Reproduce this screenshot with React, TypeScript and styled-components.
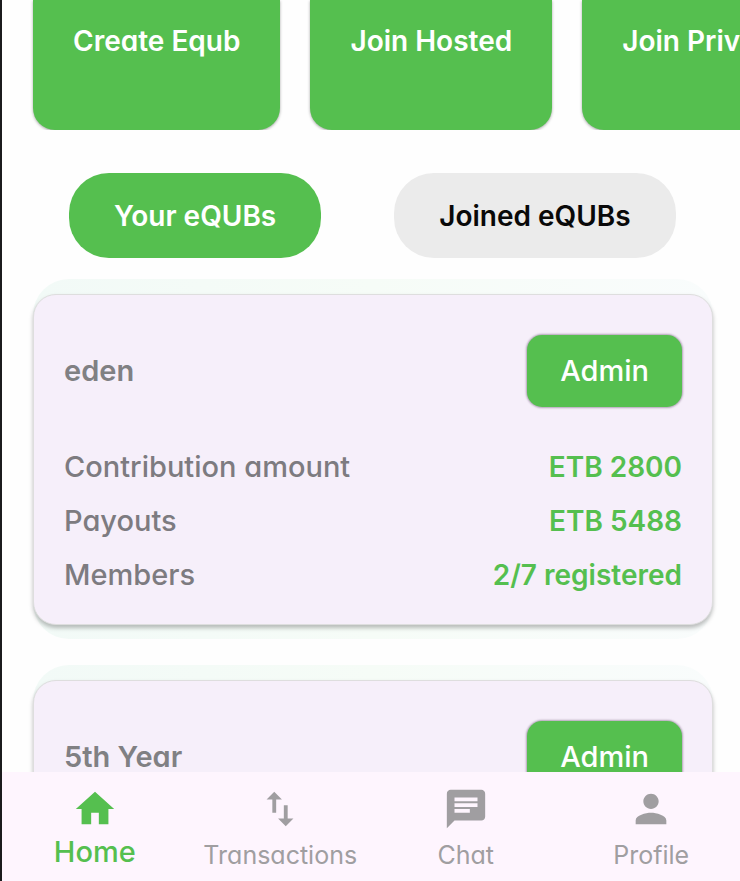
import React from "react";
import styled, { createGlobalStyle } from "styled-components";
import type { IconType } from "react-icons";
import { MdChat, MdHome, MdPerson, MdSwapVert } from "react-icons/md";

const green = "#55bf4f";

const GlobalStyle = createGlobalStyle`
  *, *::before, *::after { box-sizing: border-box; }
  body {
    margin: 0;
    background: #fefefe;
    font-family: Inter, "Open Sans", sans-serif;
    font-feature-settings: "cv11";
    font-size: 28px;
    line-height: 36px;
  }
  button { font: inherit; font-feature-settings: inherit; border: 0; margin: 0; cursor: pointer; }
`;

const Screen = styled.div`
  display: flex;
  flex-direction: column;
  height: 100vh;
  overflow: hidden;
  border-left: 2px solid #1b1b1d;
`;

const Content = styled.main`
  flex: 1;
  min-height: 0;
  overflow: hidden;
`;

const Actions = styled.section`
  display: flex;
  gap: 30px;
  padding-left: 31px;
  height: 130px;
  overflow: hidden;
`;

const ActionCard = styled.button`
  flex: none;
  padding: 0 40px 48px;
  color: #fff;
  font-weight: 600;
  white-space: nowrap;
  background: ${green};
  border-radius: 0 0 22px 22px;
  box-shadow: 0 1px 3px rgba(0, 0, 0, 0.35);
`;

const Tabs = styled.div`
  display: flex;
  gap: 73px;
  padding: 43px 0 21px 67px;
`;

const Tab = styled.button<{ $active?: boolean }>`
  flex: none;
  height: 85px;
  padding: 0 45px;
  font-weight: 600;
  white-space: nowrap;
  color: ${(p) => (p.$active ? "#fff" : "#090909")};
  background: ${(p) => (p.$active ? green : "#ebebeb")};
  border-radius: 40px;
`;

const List = styled.section`
  display: flex;
  flex-direction: column;
  gap: 26px;
  padding: 0 27px 27px 31px;
`;

const CardHalo = styled.div`
  padding: 15px 0 14px;
  border-radius: 36px;
  background: linear-gradient(90deg, #f2faf7, #f6fcf7 50%, #f9fcfc);
`;

const Card = styled.article`
  padding: 40px 30px 22px;
  border: 1px solid #dedede;
  border-radius: 23px;
  background: #f6effa;
  box-shadow: 0 3px 4px rgba(0, 0, 0, 0.26);
`;

const CardHead = styled.header`
  display: flex;
  align-items: center;
  justify-content: space-between;
  margin-bottom: 33px;
`;

const Name = styled.h2`
  margin: 0;
  font-size: 29px;
  font-weight: 600;
  color: #808083;
`;

const RoleButton = styled.button`
  height: 72px;
  padding: 0 33px;
  font-size: 29px;
  font-weight: 500;
  color: #fff;
  background: ${green};
  border-radius: 15px;
  box-shadow: 0 0 2px 1px rgba(90, 70, 100, 0.45);
`;

const Stats = styled.dl`
  margin: 0;
`;

const Stat = styled.div`
  display: flex;
  align-items: center;
  justify-content: space-between;
  height: 54px;
`;

const StatLabel = styled.dt`
  color: #7d7b80;
  font-size: 29px;
  font-weight: 500;
`;

const StatValue = styled.dd`
  margin: 0;
  color: ${green};
  font-weight: 600;
`;

const Nav = styled.nav`
  flex: none;
  display: grid;
  grid-template-columns: repeat(4, 1fr);
  height: 109px;
  margin-right: -4px;
  padding-top: 14px;
  background: #fef5fe;
`;

const NavLink = styled.a<{ $active?: boolean }>`
  display: flex;
  flex-direction: column;
  align-items: center;
  gap: ${(p) => (p.$active ? "2px" : "5px")};
  color: ${(p) => (p.$active ? green : "#a09ea1")};
  font-size: ${(p) => (p.$active ? "29px" : "25px")};
  font-weight: ${(p) => (p.$active ? 500 : 400)};
  text-decoration: none;

  svg {
    width: 46px;
    height: 46px;
  }
`;

const actions = ["Create Equb", "Join Hosted", "Join Private"];

const equbs = [
  { name: "eden", contribution: "ETB 2800", payouts: "ETB 5488", members: "2/7 registered" },
  { name: "5th Year", contribution: "ETB 2800", payouts: "ETB 5488", members: "2/7 registered" },
];

const links: { label: string; icon: IconType; active?: boolean }[] = [
  { label: "Home", icon: MdHome, active: true },
  { label: "Transactions", icon: MdSwapVert },
  { label: "Chat", icon: MdChat },
  { label: "Profile", icon: MdPerson },
];

export default function App() {
  return (
    <Screen>
      <GlobalStyle />
      <Content>
        <Actions>
          {actions.map((label) => (
            <ActionCard key={label} type="button">{label}</ActionCard>
          ))}
        </Actions>
        <Tabs>
          <Tab type="button" $active aria-pressed="true">Your eQUBs</Tab>
          <Tab type="button" aria-pressed="false">Joined eQUBs</Tab>
        </Tabs>
        <List>
          {equbs.map((equb) => (
            <CardHalo key={equb.name}>
              <Card>
                <CardHead>
                  <Name>{equb.name}</Name>
                  <RoleButton type="button">Admin</RoleButton>
                </CardHead>
                <Stats>
                  <Stat>
                    <StatLabel>Contribution amount</StatLabel>
                    <StatValue>{equb.contribution}</StatValue>
                  </Stat>
                  <Stat>
                    <StatLabel>Payouts</StatLabel>
                    <StatValue>{equb.payouts}</StatValue>
                  </Stat>
                  <Stat>
                    <StatLabel>Members</StatLabel>
                    <StatValue>{equb.members}</StatValue>
                  </Stat>
                </Stats>
              </Card>
            </CardHalo>
          ))}
        </List>
      </Content>
      <Nav>
        {links.map(({ label, icon: Icon, active }) => (
          <NavLink key={label} href="#" $active={active} aria-current={active ? "page" : undefined}>
            <Icon aria-hidden="true" />
            {label}
          </NavLink>
        ))}
      </Nav>
    </Screen>
  );
}
